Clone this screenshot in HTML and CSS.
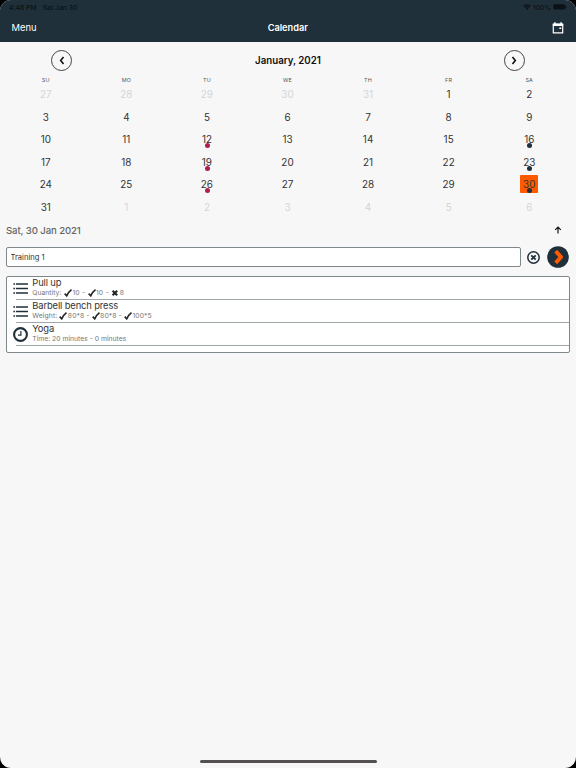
FILE: index.html
```
<!DOCTYPE html>
<html lang="en">
<head>
    <meta charset="UTF-8">
    <meta name="viewport" content="width=device-width, initial-scale=1.0">
    <title>Calendar</title>
    <link rel="stylesheet" href="styles.css">
</head>
<body>
<div class="screen">
    <header>
        <div class="status">
            <span class="time">4:48 PM</span>
            <span>Sat Jan 30</span>
            <div class="status-right">
                <svg width="8" height="6" viewBox="0 0 16 12"><path d="M1 4.5a10 10 0 0 1 14 0M3.6 7.2a6.3 6.3 0 0 1 8.8 0" fill="none" stroke="#0b1114" stroke-width="2.3"/><path d="M8 12L5.3 9.2a4 4 0 0 1 5.4 0z" fill="#0b1114"/></svg>
                <span>100%</span>
                <svg width="14" height="6" viewBox="0 0 14 6"><rect x="0.3" y="0.3" width="12" height="5.2" rx="1.4" fill="#0b1114"/><path d="M13 2v2" stroke="#0b1114"/></svg>
            </div>
        </div>
        <nav>
            <span class="menu">Menu</span>
            <h1>Calendar</h1>
            <svg class="today" width="12" height="12" viewBox="0 0 12 12"><path d="M1.3 2.4h9.4v8.5H1.3z" fill="none" stroke="#fff" stroke-width="1.2" stroke-linejoin="round"/><path d="M0.8 1.5h10.4v2.6H0.8zM2.2 0.2h1.5V2H2.2zM8.3 0.2h1.5V2H8.3zM7.3 5.4h2v1.5h-2z" fill="#fff"/></svg>
        </nav>
    </header>

    <div class="month">
        <button class="round"><svg width="6" height="9" viewBox="0 0 6 9"><path d="M4.5 1L1.7 4.5l2.8 3.5" fill="none" stroke="#111" stroke-width="1.6"/></svg></button>
        <h2>January, 2021</h2>
        <button class="round"><svg width="6" height="9" viewBox="0 0 6 9"><path d="M1.5 1l2.8 3.5L1.5 8" fill="none" stroke="#111" stroke-width="1.6"/></svg></button>
    </div>

    <div class="weekdays">
        <span>SU</span><span>MO</span><span>TU</span><span>WE</span><span>TH</span><span>FR</span><span>SA</span>
    </div>
    <div class="days">
        <span class="off">27</span><span class="off">28</span><span class="off">29</span><span class="off">30</span><span class="off">31</span><span>1</span><span>2</span>
        <span>3</span><span>4</span><span>5</span><span>6</span><span>7</span><span>8</span><span>9</span>
        <span>10</span><span>11</span><span class="dot red">12</span><span>13</span><span>14</span><span>15</span><span class="dot">16</span>
        <span>17</span><span>18</span><span class="dot red">19</span><span>20</span><span>21</span><span>22</span><span class="dot">23</span>
        <span>24</span><span>25</span><span class="dot red">26</span><span>27</span><span>28</span><span>29</span><span class="dot selected">30</span>
        <span>31</span><span class="off">1</span><span class="off">2</span><span class="off">3</span><span class="off">4</span><span class="off">5</span><span class="off">6</span>
    </div>

    <div class="date-row">
        <span>Sat, 30 Jan 2021</span>
        <svg width="8" height="8" viewBox="0 0 8 8"><path d="M4 7.6V1.2M1.2 3.9L4 1.1l2.8 2.8" fill="none" stroke="#111" stroke-width="1.2"/></svg>
    </div>

    <div class="training">
        <input type="text" value="Training 1">
        <svg width="13" height="14" viewBox="0 0 13 14"><circle cx="6.5" cy="7.5" r="5.7" fill="none" stroke="#20303a" stroke-width="1.5"/><path d="M4.3 5.3l4.4 4.4M8.7 5.3L4.3 9.7" stroke="#20303a" stroke-width="1.8"/></svg>
        <svg class="go" width="22" height="22" viewBox="0 0 22 22"><circle cx="11" cy="11" r="10.8" fill="#20303a"/><path d="M8.7 5.2l5.3 5.8-5.3 5.8" fill="none" stroke="#ff5a00" stroke-width="4" stroke-linejoin="round"/></svg>
    </div>

    <div class="exercises">
        <div class="exercise">
            <svg class="icon" width="15" height="15" viewBox="0 0 15 15"><path d="M3 3h12M3 7.5h12M3 12h12" stroke="#20303a" stroke-width="1.7"/><path d="M0.4 3h1.7M0.4 7.5h1.7M0.4 12h1.7" stroke="#20303a" stroke-width="1.7"/></svg>
            <div class="name">Pull up</div>
            <div class="detail sets">Quantity: <svg class="check" viewBox="0 0 8 8"><path d="M0.7 4.6l2 2.2Q4.5 3 7.5 0.7" fill="none" stroke="#222" stroke-width="1.6"/></svg>10 - <svg class="check" viewBox="0 0 8 8"><path d="M0.7 4.6l2 2.2Q4.5 3 7.5 0.7" fill="none" stroke="#222" stroke-width="1.6"/></svg>10 - <svg class="check" viewBox="0 0 8 8"><path d="M1.6 1.7l4.6 4.6M6.2 1.7L1.6 6.3" stroke="#222" stroke-width="2"/></svg>8</div>
        </div>
        <div class="exercise">
            <svg class="icon" width="15" height="15" viewBox="0 0 15 15"><path d="M3 3h12M3 7.5h12M3 12h12" stroke="#20303a" stroke-width="1.7"/><path d="M0.4 3h1.7M0.4 7.5h1.7M0.4 12h1.7" stroke="#20303a" stroke-width="1.7"/></svg>
            <div class="name">Barbell bench press</div>
            <div class="detail weights">Weight: <svg class="check" viewBox="0 0 8 8"><path d="M0.7 4.6l2 2.2Q4.5 3 7.5 0.7" fill="none" stroke="#222" stroke-width="1.6"/></svg>80*8 - <svg class="check" viewBox="0 0 8 8"><path d="M0.7 4.6l2 2.2Q4.5 3 7.5 0.7" fill="none" stroke="#222" stroke-width="1.6"/></svg>80*8 - <svg class="check" viewBox="0 0 8 8"><path d="M0.7 4.6l2 2.2Q4.5 3 7.5 0.7" fill="none" stroke="#222" stroke-width="1.6"/></svg>100*5</div>
        </div>
        <div class="exercise">
            <svg class="icon" width="15" height="15" viewBox="0 0 15 15"><circle cx="7.5" cy="7.5" r="6.4" fill="none" stroke="#20303a" stroke-width="2.1"/><path d="M7.9 4v4.2H5" fill="none" stroke="#20303a" stroke-width="1.2"/></svg>
            <div class="name">Yoga</div>
            <div class="detail">Time: 20 minutes - 0 minutes</div>
        </div>
    </div>

    <div class="home-bar"></div>
</div>
</body>
</html>
```
FILE: styles.css
```
body {
    margin: 0;
    background-color: #000;
    font-family: Inter, "Liberation Sans", sans-serif;
    font-feature-settings: "calt" 0;
    color: #333;
}
.screen {
    display: flex;
    flex-direction: column;
    height: 768px;
    background-color: #f7f7f7;
    border-radius: 11px;
    overflow: hidden;
}
header {
    height: 42px;
    background-color: #20303a;
    flex-shrink: 0;
}
.status {
    display: flex;
    align-items: center;
    height: 14px;
    padding: 0 9px 0 9px;
    font-size: 6.8px;
    font-weight: 500;
    color: #0b1114;
}
.time {
    margin-right: 6px;
}
.status-right {
    display: flex;
    align-items: center;
    gap: 2px;
    margin-left: auto;
}
nav {
    display: grid;
    grid-template-columns: 1fr auto 1fr;
    align-items: center;
    height: 27px;
    padding: 0 12px 0 11.5px;
    color: #fff;
}
.menu {
    font-size: 9.4px;
}
h1 {
    margin: 0;
    font-size: 9.2px;
    font-weight: 600;
}
.today {
    justify-self: end;
}

/* calendar */
.month {
    display: flex;
    justify-content: space-between;
    align-items: center;
    height: 37px;
    padding: 0 51px;
}
h2 {
    margin: 0;
    font-size: 9.7px;
    line-height: 11px;
    font-weight: 600;
    color: #111;
}
.round {
    display: flex;
    justify-content: center;
    align-items: center;
    width: 21px;
    height: 21px;
    padding: 0;
    border: 1px solid #444;
    border-radius: 50%;
    background: none;
}
.weekdays, .days {
    display: grid;
    grid-template-columns: repeat(7, 1fr);
    padding: 0 6.5px 0 5.5px;
    text-align: center;
}
.weekdays {
    height: 4px;
    line-height: 2px;
    font-size: 5.4px;
    letter-spacing: 0.2px;
    color: #555;
}
.days {
    grid-auto-rows: 22.5px;
    font-size: 9.9px;
    line-height: 22px;
}
.days span {
    position: relative;
}
.days .off {
    color: #d3d5d7;
}
.dot::after {
    content: "";
    position: absolute;
    left: 50%;
    top: 15px;
    width: 5px;
    height: 5px;
    margin-left: -2.3px;
    border-radius: 50%;
    background-color: #20303a;
}
.red::after {
    background-color: #b01e50;
}
.selected {
    justify-self: center;
    align-self: center;
    width: 18px;
    height: 18px;
    line-height: 18px;
    border-radius: 1px;
    background-color: #ff5a00;
}
.selected::after {
    top: 12.5px;
}

/* selected day */
.date-row {
    display: flex;
    justify-content: space-between;
    align-items: center;
    height: 24px;
    padding: 0 14px 0 6px;
    font-size: 9.6px;
    font-weight: 500;
    letter-spacing: -0.1px;
    color: #666;
}
.training {
    display: flex;
    align-items: center;
    height: 30px;
    padding: 0 7px 0 6px;
}
input {
    flex: 1;
    box-sizing: border-box;
    height: 20px;
    margin-right: 6px;
    padding: 0 3.5px;
    border: 1px solid #7d878c;
    border-radius: 2px;
    background-color: #fff;
    font-family: inherit;
    font-size: 7.6px;
    color: #333;
}
.go {
    margin-left: 7px;
}
.exercises {
    box-sizing: border-box;
    height: 77px;
    margin: 4px 6px 0;
    padding-left: 6px;
    border: 1px solid #7d878c;
    border-radius: 2px;
    background-color: #fff;
}
.exercise {
    display: grid;
    grid-template-columns: 19.3px 1fr;
    grid-template-rows: 11px 11px;
    height: 23px;
    background: linear-gradient(#a0a7ab, #a0a7ab) 3px 22px / 100% 1px no-repeat;
}
.icon {
    grid-row: 1 / 3;
    align-self: center;
}
.name {
    font-size: 9.4px;
    line-height: 11px;
    letter-spacing: -0.13px;
}
.detail {
    font-size: 6.8px;
    line-height: 10px;
    color: #777;
}
.sets {
    word-spacing: 0.6px;
}
.weights {
    letter-spacing: 0.1px;
}
.check {
    width: 8px;
    height: 8px;
    margin-right: 0.5px;
    vertical-align: -1.5px;
}
.home-bar {
    width: 177px;
    height: 3px;
    margin: auto auto 5px;
    border-radius: 2px;
    background-color: #555152;
}
```
